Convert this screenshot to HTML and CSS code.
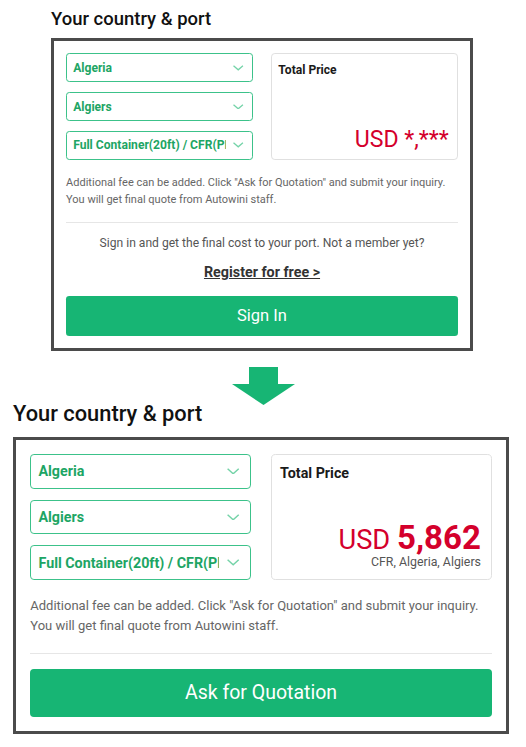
FILE: index.html
```html
<!DOCTYPE html>
<html lang="en">
<head>
<meta charset="utf-8">
<title>Your country &amp; port</title>
<link rel="stylesheet" href="styles.css">
</head>
<body>
<section class="block block-small">
  <h2 class="title">Your country &amp; port</h2>
  <div class="card">
    <div class="grid">
      <div class="selects">
        <div class="select"><span class="select-text">Algeria</span><svg class="chev" viewBox="0 0 10 5"><path d="M0.5 0.5 L5 4.5 L9.5 0.5"/></svg></div>
        <div class="select"><span class="select-text">Algiers</span><svg class="chev" viewBox="0 0 10 5"><path d="M0.5 0.5 L5 4.5 L9.5 0.5"/></svg></div>
        <div class="select"><span class="select-text">Full Container(20ft) / CFR(PREPAID)</span><svg class="chev" viewBox="0 0 10 5"><path d="M0.5 0.5 L5 4.5 L9.5 0.5"/></svg></div>
      </div>
      <div class="price">
        <div class="price-label">Total Price</div>
        <div class="price-amount"><span class="cur">USD</span> <span class="masked">*,***</span></div>
      </div>
    </div>
    <p class="note">Additional fee can be added. Click "Ask for Quotation" and submit your inquiry.<br>You will get final quote from Autowini staff.</p>
    <hr class="divider">
    <p class="signin-text">Sign in and get the final cost to your port. Not a member yet?</p>
    <p class="register-wrap"><a class="register" href="#">Register for free &gt;</a></p>
    <button class="btn btn-signin" type="button">Sign In</button>
  </div>
</section>

<svg class="arrow" viewBox="0 0 63 38"><polygon points="17,0 46,0 46,17 63,17 31.5,38 0,17 17,17"/></svg>

<section class="block block-large">
  <h2 class="title">Your country &amp; port</h2>
  <div class="card">
    <div class="grid">
      <div class="selects">
        <div class="select"><span class="select-text">Algeria</span><svg class="chev" viewBox="0 0 10 5"><path d="M0.5 0.5 L5 4.5 L9.5 0.5"/></svg></div>
        <div class="select"><span class="select-text">Algiers</span><svg class="chev" viewBox="0 0 10 5"><path d="M0.5 0.5 L5 4.5 L9.5 0.5"/></svg></div>
        <div class="select"><span class="select-text">Full Container(20ft) / CFR(PREPAID)</span><svg class="chev" viewBox="0 0 10 5"><path d="M0.5 0.5 L5 4.5 L9.5 0.5"/></svg></div>
      </div>
      <div class="price">
        <div class="price-label">Total Price</div>
        <div class="price-amount"><span class="cur">USD</span> <span class="value">5,862</span></div>
        <div class="price-sub">CFR, Algeria, Algiers</div>
      </div>
    </div>
    <p class="note">Additional fee can be added. Click "Ask for Quotation" and submit your inquiry.<br>You will get final quote from Autowini staff.</p>
    <hr class="divider">
    <button class="btn btn-quote" type="button">Ask for Quotation</button>
  </div>
</section>
</body>
</html>
```

FILE: styles.css
```css
* { box-sizing: border-box; }

html, body {
  margin: 0;
  padding: 0;
  background: #ffffff;
}

body {
  font-family: Roboto, "Liberation Sans", Arial, sans-serif;
  color: #222;
  padding-top: 10px;
}

.block-small {
  font-size: 11px;
  width: 422px;
  margin-left: 51px;
}

.block-large {
  font-size: 13px;
  width: 496px;
  margin-left: 13px;
}

.title {
  margin: 0 0 0.52em 0;
  font-size: 1.68em;
  line-height: 1;
  font-weight: 500;
  color: #111;
}

.card {
  border: 3px solid #4b4b4b;
  padding: 1.1em;
  background: #fff;
}

.grid {
  display: grid;
  grid-template-columns: minmax(0, 1fr) minmax(0, 1fr);
  column-gap: 1.55em;
}

.selects {
  display: flex;
  flex-direction: column;
  gap: 0.86em;
}

.select {
  display: flex;
  align-items: center;
  height: 2.66em;
  border: 1px solid #3cc28a;
  border-radius: 0.3em;
  padding: 0 0.8em 0 0.55em;
  color: #1da564;
  font-weight: 700;
}

.select-text {
  flex: 1;
  min-width: 0;
  overflow: hidden;
  white-space: nowrap;
  font-size: 1.1em;
  margin-right: 0.6em;
}

.chev {
  width: 0.95em;
  height: 0.5em;
  flex: none;
  fill: none;
  stroke: #74d3a8;
  stroke-width: 1.2;
}

.price {
  display: flex;
  flex-direction: column;
  border: 1px solid #e0e0e0;
  border-radius: 0.35em;
  padding: 0.8em 0.75em 0.7em 0.62em;
}

.price-label {
  font-size: 1.1em;
  font-weight: 700;
  line-height: 1.2;
  color: #1a1a1a;
}

.price-amount {
  margin-top: auto;
  text-align: right;
  color: #d4002c;
  font-size: 2.1em;
  line-height: 1;
  white-space: nowrap;
}

.value {
  font-size: 1.21em;
  font-weight: 700;
}

.price-sub {
  text-align: right;
  font-size: 0.95em;
  line-height: 1.2;
  color: #555;
  margin-top: 0.1em;
}

.note {
  margin: 1.25em 0 0 0;
  line-height: 1.55;
  color: #666;
}

.divider {
  margin: 1.3em 0 0 0;
  border: 0;
  border-top: 1px solid #e6e6e6;
  height: 0;
}

.signin-text {
  margin: 0.9em 0 0 0;
  text-align: center;
  font-size: 1.1em;
  line-height: 1.5;
  color: #555;
}

.register-wrap {
  margin: 1em 0 0 0;
  text-align: center;
  line-height: 1.3;
}

.register {
  font-size: 1.3em;
  font-weight: 700;
  color: #333;
  text-decoration: underline;
}

.btn {
  display: block;
  width: 100%;
  height: 2.45em;
  border: 0;
  border-radius: 0.2em;
  background: #17b574;
  color: #fff;
  font-family: inherit;
  font-size: 1.5em;
  line-height: 1;
  cursor: pointer;
}

.btn-signin {
  margin-top: 0.87em;
}

.btn-quote {
  margin-top: 0.74em;
}

.arrow {
  display: block;
  width: 63px;
  height: 38px;
  margin: 16px auto -2px auto;
  fill: #17b574;
}
```
